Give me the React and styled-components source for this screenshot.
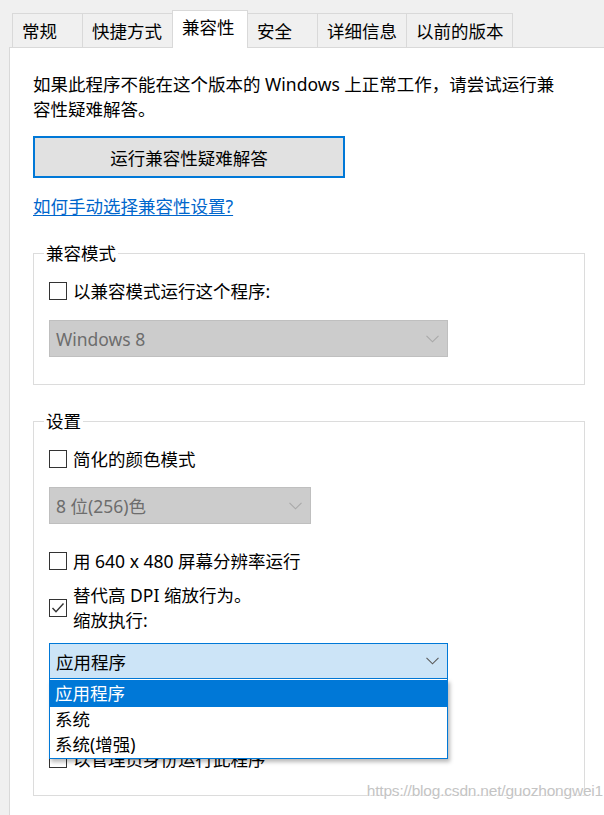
import React from 'react';
import styled, { createGlobalStyle, css } from 'styled-components';

const GlobalStyle = createGlobalStyle`
  html, body {
    margin: 0;
    padding: 0;
    background: #f0f0f0;
  }
  body {
    font-family: "Noto Sans", "Noto Sans CJK SC", sans-serif;
    font-size: 17.5px;
    color: #000;
  }
`;

const Page = styled.div`
  position: relative;
  width: 604px;
  height: 815px;
  overflow: hidden;
  box-sizing: border-box;
  padding: 10px 0 0 9px;
  background: #f0f0f0;
`;

// Tabs
const TabStrip = styled.div`
  display: flex;
  align-items: flex-end;
  height: 37px;
  padding-left: 3px;
  position: relative;
  z-index: 1;
`;

const Tab = styled.div`
  box-sizing: border-box;
  width: ${(p) => p.$w}px;
  height: 34px;
  margin-right: -1px;
  padding-left: 9px;
  border: 1px solid #d9d9d9;
  border-bottom: none;
  background: #f0f0f0;
  line-height: 33px;
  white-space: nowrap;
  font-family: "Noto Sans CJK SC", sans-serif;

  ${(p) =>
    p.$active &&
    css`
      height: 38px;
      margin-bottom: -1px;
      background: #fff;
      line-height: 32px;
      position: relative;
      z-index: 2;
    `}
`;

const Panel = styled.div`
  box-sizing: border-box;
  width: 640px;
  height: 800px;
  border: 1px solid #d9d9d9;
  background: #fff;
  padding: 24px 0 0 23px;
`;

const Intro = styled.p`
  margin: 0;
  line-height: 25px;
  white-space: nowrap;
`;

const TroubleButton = styled.div`
  box-sizing: border-box;
  margin-top: 14px;
  width: 312px;
  height: 42px;
  border: 2px solid #0078d7;
  background: #e1e1e1;
  display: flex;
  align-items: center;
  justify-content: center;
  font-family: "Noto Sans CJK SC", sans-serif;
`;

const HelpLink = styled.a`
  display: inline-block;
  margin-top: 16px;
  line-height: 25px;
  color: #0066cc;
  text-decoration: underline;
  text-underline-offset: 2px;
  cursor: pointer;
`;

const Group = styled.fieldset`
  box-sizing: border-box;
  width: 552px;
  margin: ${(p) => p.$mt}px 0 0 0;
  padding: 16px 14px ${(p) => p.$pb}px 15px;
  border: 1px solid #dcdcdc;
  min-width: 0;
`;

const GroupTitle = styled.legend`
  padding: 0 2px;
  margin-left: -5px;
  line-height: 22px;
  font-family: "Noto Sans CJK SC", sans-serif;
`;

// Checkboxes
const CheckRow = styled.div`
  display: flex;
  align-items: center;
  gap: 6px;
  margin-top: ${(p) => p.$mt || 0}px;
  line-height: 22px;
  white-space: nowrap;
`;

const Box = styled.span`
  box-sizing: border-box;
  flex: none;
  width: 18px;
  height: 18px;
  border: 1px solid #333;
  background: #fff;
  display: flex;
  align-items: center;
  justify-content: center;
`;

const CheckLines = styled.div`
  line-height: 25px;
`;

// Combo boxes
const ComboWrap = styled.div`
  position: relative;
  width: ${(p) => p.$w}px;
  margin-top: ${(p) => p.$mt}px;
  z-index: 2;
`;

const Combo = styled.div`
  box-sizing: border-box;
  height: 37px;
  display: flex;
  align-items: center;
  justify-content: space-between;
  padding: 0 8px 0 6px;
  border: 1px solid #bfbfbf;
  background: #cccccc;
  color: #6d6d6d;
  white-space: nowrap;

  ${(p) =>
    p.$focused &&
    css`
      height: 36px;
      border-color: #0078d7;
      background: #cce4f7;
      color: #000;
    `}
`;

const DropList = styled.div`
  position: absolute;
  top: 100%;
  left: 0;
  right: 0;
  box-sizing: border-box;
  border: 1px solid #0078d7;
  border-top: none;
  background: #fff;
  padding: 1px 0 1px;
  box-shadow: 2px 3px 4px rgba(0, 0, 0, 0.28);
`;

const DropItem = styled.div`
  height: ${(p) => (p.$selected ? 27 : 25)}px;
  line-height: ${(p) => (p.$selected ? 27 : 25)}px;
  padding-left: 5px;
  background: ${(p) => (p.$selected ? '#0078d7' : '#fff')};
  color: ${(p) => (p.$selected ? '#fff' : '#000')};
  white-space: nowrap;
`;

const Watermark = styled.div`
  position: absolute;
  right: 1px;
  top: 782px;
  font-family: "Liberation Sans", Arial, sans-serif;
  font-size: 15.5px;
  letter-spacing: -0.2px;
  color: #c4c4c4;
  text-shadow: 0 0 1px #fff, 1px 1px 0 #fff;
`;

const Chevron = ({ color }) => (
  <svg width="13" height="8" viewBox="0 0 13 8">
    <polyline points="0.5,0.8 6.5,6.8 12.5,0.8" fill="none" stroke={color} strokeWidth="1.1" />
  </svg>
);

const Check = ({ checked, children, mt }) => (
  <CheckRow $mt={mt}>
    <Box>
      {checked && (
        <svg width="14" height="12" viewBox="0 0 14 12">
          <polyline points="1.5,6 5,9.8 12.5,1.5" fill="none" stroke="#333" strokeWidth="1.4" />
        </svg>
      )}
    </Box>
    {children}
  </CheckRow>
);

const tabs = [
  { label: '常规', w: 71 },
  { label: '快捷方式', w: 91 },
  { label: '兼容性', w: 76, active: true },
  { label: '安全', w: 71 },
  { label: '详细信息', w: 90 },
  { label: '以前的版本', w: 107 },
];

export default function App() {
  return (
    <Page>
      <GlobalStyle />
      <TabStrip>
        {tabs.map((t) => (
          <Tab key={t.label} $w={t.w} $active={t.active}>
            {t.label}
          </Tab>
        ))}
      </TabStrip>
      <Panel>
        <Intro>
          如果此程序不能在这个版本的 Windows 上正常工作，请尝试运行兼
          <br />
          容性疑难解答。
        </Intro>
        <TroubleButton>运行兼容性疑难解答</TroubleButton>
        <div>
          <HelpLink>如何手动选择兼容性设置?</HelpLink>
        </div>

        <Group $mt={23} $pb={27}>
          <GroupTitle>兼容模式</GroupTitle>
          <Check>以兼容模式运行这个程序:</Check>
          <ComboWrap $w={399} $mt={18}>
            <Combo>
              <span>Windows 8</span>
              <Chevron color="#a8a8a8" />
            </Combo>
          </ComboWrap>
        </Group>

        <Group $mt={25} $pb={25}>
          <GroupTitle>设置</GroupTitle>
          <Check>简化的颜色模式</Check>
          <ComboWrap $w={262} $mt={17}>
            <Combo>
              <span>8 位(256)色</span>
              <Chevron color="#a8a8a8" />
            </Combo>
          </ComboWrap>
          <Check mt={26}>用 640 x 480 屏幕分辨率运行</Check>
          <Check checked mt={11}>
            <CheckLines>
              替代高 DPI 缩放行为。
              <br />
              缩放执行:
            </CheckLines>
          </Check>
          <ComboWrap $w={399} $mt={10}>
            <Combo $focused>
              <span>应用程序</span>
              <Chevron color="#5a5a5a" />
            </Combo>
            <DropList>
              <DropItem $selected>应用程序</DropItem>
              <DropItem>系统</DropItem>
              <DropItem>系统(增强)</DropItem>
            </DropList>
          </ComboWrap>
          <Check mt={69}>以管理员身份运行此程序</Check>
        </Group>
      </Panel>
      <Watermark>https://blog.csdn.net/guozhongwei1</Watermark>
    </Page>
  );
}
